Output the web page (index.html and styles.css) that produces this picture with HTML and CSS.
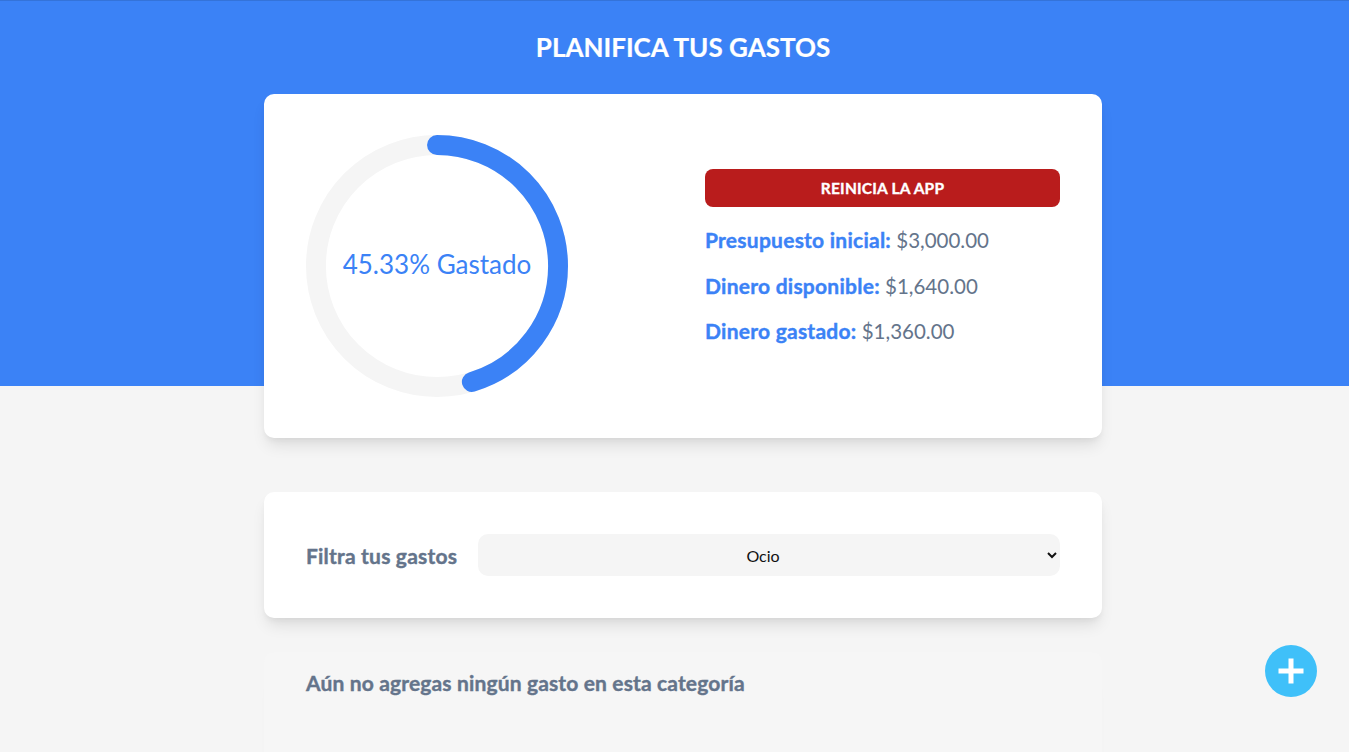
FILE: index.html
```html
<!DOCTYPE html>
<html lang="es">
<head>
<meta charset="utf-8">
<title>Planificador de Gastos</title>
<link rel="stylesheet" href="styles.css">
</head>
<body>
<div class="page">
  <header class="header">
    <h1 class="title">Planifica tus Gastos</h1>
    <section class="card budget">
      <div class="chart">
        <svg class="ring" viewBox="0 0 100 100">
          <circle class="track" cx="50" cy="50" r="46.2"></circle>
          <circle class="bar" cx="50" cy="50" r="46.2" stroke-dasharray="290.28" stroke-dashoffset="158.69" transform="rotate(-90 50 50)"></circle>
        </svg>
        <p class="chart-label">45.33% Gastado</p>
      </div>
      <div class="summary">
        <button class="reset" type="button">Reinicia la app</button>
        <p class="row"><span class="key">Presupuesto inicial:</span> $3,000.00</p>
        <p class="row"><span class="key">Dinero disponible:</span> $1,640.00</p>
        <p class="row"><span class="key">Dinero gastado:</span> $1,360.00</p>
      </div>
    </section>
  </header>

  <main class="main">
    <section class="card filter">
      <label class="filter-label" for="cat">Filtra tus gastos</label>
      <select class="filter-select" id="cat">
        <option>Ocio</option>
      </select>
    </section>

    <section class="list">
      <h2 class="empty">Aún no agregas ningún gasto en esta categoría</h2>
    </section>
  </main>

  <button class="add" type="button" aria-label="Nuevo gasto">
    <svg viewBox="0 0 52 52" width="52" height="52">
      <circle cx="26" cy="26" r="26" fill="#3fc0f9"></circle>
      <rect x="13.5" y="23.5" width="25" height="5" fill="#fff"></rect>
      <rect x="23.5" y="13.5" width="5" height="25" fill="#fff"></rect>
    </svg>
  </button>
</div>
</body>
</html>
```

FILE: styles.css
```css
* { box-sizing: border-box; }

html, body {
  margin: 0;
  padding: 0;
}

body {
  font-family: "Lato", "Liberation Sans", sans-serif;
  background: #f5f5f5;
  color: #64748b;
  min-height: 752px;
  overflow: hidden;
}

.page {
  width: 1366px;
  background: linear-gradient(#3b82f6 0, #3b82f6 386px, #f5f5f5 386px);
  min-height: 752px;
}

.header {
  border-top: 1px solid #3473d9;
}

.title {
  margin: 0;
  padding: 31px 0 31px;
  color: #fff;
  text-align: center;
  text-transform: uppercase;
  font-size: 26px;
  font-weight: 700;
  line-height: 31px;
  -webkit-text-stroke: 0.2px #fff;
}

.card {
  width: 838px;
  margin: 0 auto;
  background: #fff;
  border-radius: 10px;
  box-shadow: 0 10px 15px -3px rgba(0,0,0,0.1), 0 4px 6px -2px rgba(0,0,0,0.05);
}

.budget {
  display: grid;
  grid-template-columns: 355px 355px;
  column-gap: 44px;
  padding: 41px 42px;
  align-items: start;
}

.chart {
  display: grid;
  width: 262px;
  height: 262px;
  place-items: center;
}

.ring, .chart-label {
  grid-area: 1 / 1;
}

.ring {
  width: 262px;
  height: 262px;
  display: block;
}

.track {
  fill: none;
  stroke: #f5f5f5;
  stroke-width: 7.6;
}

.bar {
  fill: none;
  stroke: #3b82f6;
  stroke-width: 7.6;
  stroke-linecap: round;
}

.chart-label {
  margin: 0 0 5px;
  color: #3b82f6;
  font-size: 26px;
  font-weight: 400;
}

.summary {
  display: flex;
  flex-direction: column;
  gap: 20px;
  margin-top: 34px;
}

.reset {
  height: 38px;
  margin-bottom: 0;
  border: none;
  border-radius: 8px;
  background: #b91c1c;
  color: #fff;
  font-family: inherit;
  font-size: 15.5px;
  font-weight: 700;
  letter-spacing: 0.2px;
  -webkit-text-stroke: 0.35px #fff;
  text-transform: uppercase;
  cursor: pointer;
}

.row {
  margin: 0;
  height: 25.5px;
  font-size: 20.5px;
  line-height: 25px;
  color: #64748b;
}

.key {
  color: #3b82f6;
  font-weight: 700;
  font-size: 21px;
  letter-spacing: 0.25px;
  -webkit-text-stroke: 0.4px #3b82f6;
}

.main {
  padding-top: 54px;
}

.filter {
  display: flex;
  align-items: center;
  gap: 21px;
  padding: 42px 42px;
}

.filter-label {
  font-size: 21px;
  font-weight: 700;
  letter-spacing: 0.2px;
  color: #64748b;
  -webkit-text-stroke: 0.4px #64748b;
  white-space: nowrap;
}

.filter-select {
  flex: 1;
  height: 42px;
  border: none;
  border-radius: 10px;
  background: #f5f5f5;
  font-family: "Lato", "Liberation Sans", sans-serif;
  font-size: 16px;
  color: #111;
  text-align: center;
  text-align-last: center;
  padding: 0 8px;
}

.list {
  width: 838px;
  margin: 34px auto 0;
  padding: 19px 42px 80px;
  background: #f6f6f6;
  border-radius: 10px;
  box-shadow: 0 22px 15px -10px rgba(0,0,0,0.06);
}

.empty {
  margin: 0;
  font-size: 21px;
  line-height: 24px;
  font-weight: 700;
  letter-spacing: 0.15px;
  color: #64748b;
  -webkit-text-stroke: 0.4px #64748b;
}

.add {
  position: fixed;
  right: 32px;
  bottom: 55px;
  width: 52px;
  height: 52px;
  padding: 0;
  border: none;
  background: none;
  cursor: pointer;
}

.add svg { display: block; }
```
